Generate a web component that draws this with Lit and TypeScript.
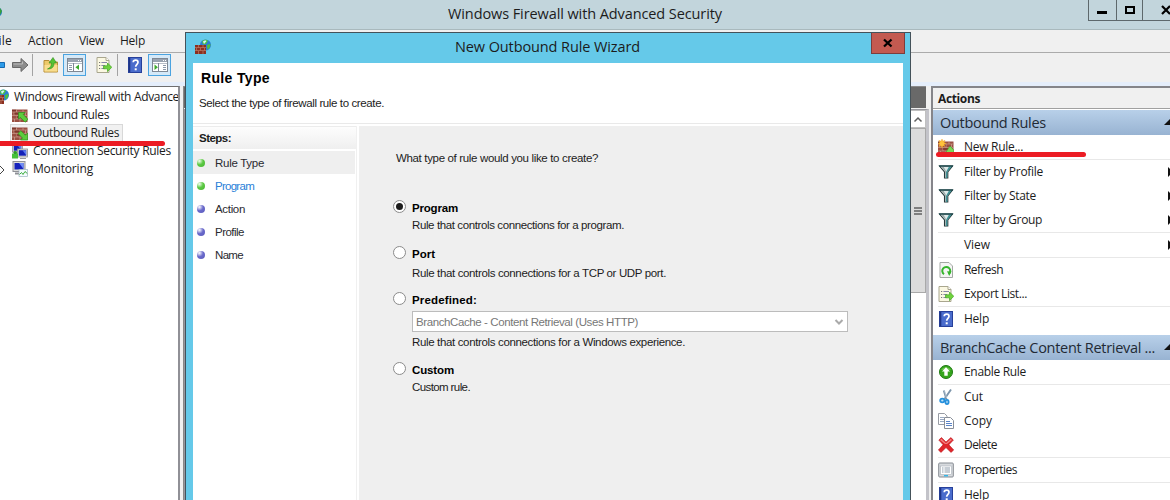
import { LitElement, html, svg, css, nothing, TemplateResult } from "lit";
import { customElement, property } from "lit/decorators.js";

const bricks = svg`
  <rect x="0" y="2.500" width="15.500" height="12.500" fill="#9a4f42"/>
  <path d="M0 5h15.500M0 8.500h15.500M0 12h15.500" stroke="#c99a88" stroke-width=".7"/>
  <path d="M4.500 2.500v2.500M11 2.500v2.500M2 5v3.500M8 5v3.500M13.500 5v3.500M5 8.500v3.500M11 8.500v3.500M2.500 12v3M8 12v3" stroke="#d0a494" stroke-width=".7"/>
  <path d="M0 3.500h4M5 10h5M2.500 6.500h5" stroke="#7c382c" stroke-width="1.400"/>`;

const helpIcon = svg`
  <rect x="1.5" y=".5" width="13" height="15" fill="#4a6ccc" stroke="#27409a"/>
  <path d="M2.5 1v14" stroke="#1d3488" stroke-width="1.6"/>
  <path d="M6.2 5.2C6.4 2.4 11 2.4 11 5.2C11 7.3 8.7 7.4 8.7 9.8" fill="none" stroke="#fff" stroke-width="1.7"/>
  <rect x="7.7" y="11.3" width="2" height="2" fill="#fff"/>`;

const exportIcon = svg`
  <path d="M1 .5h9l3 3v12H1z" fill="#fbf8e2" stroke="#a9a68e"/>
  <path d="M10 .5v3h3" fill="#fff" stroke="#a9a68e"/>
  <path d="M3 5.5h1.2M3 8.5h1.2M3 11.5h1.2" stroke="#777" stroke-width="1.2"/>
  <path d="M5.4 5.5H11M5.4 8.5H9M5.4 11.5H9" stroke="#8a86a8" stroke-width="1.2"/>
  <path d="M7.5 8.8h4V6l4.3 4.3-4.3 4.3v-2.8h-4z" fill="#6fd23c" stroke="#43a522" stroke-width=".7"/>`;

const screen = (x: number, y: number) => svg`
  <rect x="${x}" y="${y}" width="10" height="8" fill="#dcdcd8" stroke="#8f9096" stroke-width=".8"/>
  <rect x="${x + 1.3}" y="${y + 1.2}" width="7.4" height="5.5" fill="#1420b8"/>
  <path d="M${x + 5} ${y + 1.2}h3.7v5z" fill="#5b7bf0"/>`;

const pane = (left: boolean) => svg`
  <rect x=".5" y="1.5" width="15" height="13" fill="#fff" stroke="#7f8894"/>
  <rect x="1" y="2" width="14" height="3" fill="#99a3b0"/>
  <path d="M11 3.5h1M13 3.5h1" stroke="#fff"/>
  <path d="M1 6.5h14" stroke="#b7bec8"/>
  <path d="${left ? "M6.5 6v8" : "M6.5 6v8"}" stroke="#7f8894"/>
  <path d="${left ? "M2 8.5h3M2 10.5h3M2 12.5h3" : "M11 8.5h3M11 10.5h3M11 12.5h3"}" stroke="#8c99aa"/>
  <path d="${left ? "M12 7.5v5.6L8.4 10.3z" : "M2.5 7.5v5.6l3.4-2.8z"}" fill="#3cab2c"/>`;

const ICONS: Record<string, TemplateResult | unknown> = {
  firewall: svg`
    <circle cx="10.5" cy="6" r="5.5" fill="#2c7fd2"/>
    <path d="M7 2.5C9 0 12 .5 13 2L11 5 8 5.500zM12 6l3.500-1c0 3-1.500 5-3 5.500z" fill="#4cc23e"/>
    <path d="M8 2.500C9 1.500 10.500 1.200 11.500 2L9 5z" fill="#d5f5ff"/>
    <rect x="0" y="6" width="11" height="9" fill="#8b2f20"/>
    <path d="M0 8.500h11M0 11.500h11M3.500 6v2.500M8 6v2.500M1.500 9v2.500M5.500 9v2.500M9.500 9v2.500M3.500 12v3M8 12v3" stroke="#c58a74" stroke-width=".6"/>`,
  inbound: svg`${bricks}<path d="M6.500 5.500h6.700l-2 2 4.800 4.800-2.900 2.900-4.800-4.800-1.800 1.800z" fill="#5ccc3c" stroke="#2c8f1c" stroke-width=".7"/>`,
  outbound: svg`${bricks}<path d="M15.700 15H8.500l2-2-4.500-4.500L8.900 5.700l4.500 4.500 2.300-2.300z" fill="#5ccc3c" stroke="#2c8f1c" stroke-width=".7"/>`,
  newrule: svg`${bricks}<path d="M15.800 15h-9l2.200-3.500 3-4.500 3.800 4z" fill="#7cd957" stroke="#3f9a2c" stroke-width=".6"/>
    <path d="M4 0l1 2.300L7 1.300 6 3.500 8.300 4.500 6 5.300l1 2.200L5 6.700 4 9 3 6.700.8 7.500l1-2.200L0 4.500l1.800-1-1-2.200L3 2.300z" fill="#ffc23a" stroke="#ee9a28" stroke-width=".4"/>`,
  security: svg`${screen(0.5, 1)}${screen(5.5, 6)}
    <path d="M0 15.500v-5h2V8.500h3v2h1v5z" fill="#46c03a"/><circle cx="3" cy="9.500" r="1.600" fill="#2f9a2a"/><path d="M8 15.500h6" stroke="#9a9aa0"/>`,
  monitor: svg`<rect x="1" y=".5" width="12" height="10" fill="#dcdcda" stroke="#8f9096"/><rect x="2.500" y="2" width="9" height="6.500" fill="#1622bc"/><path d="M7 2h4.500v6z" fill="#6f8cf5"/>
    <path d="M3 12.500h8" stroke="#8f9096" stroke-width="2"/><rect x="7" y="8.500" width="8.500" height="7" fill="#f4fbff" stroke="#a0b4c0" stroke-width=".7"/>
    <path d="M7.500 13.500l2-2 1.500 2 2-3 2.300 2" fill="none" stroke="#39ad38"/>`,
  back: svg`<path d="M0 8l7-6v3.500h8.500v5H7V14z" fill="#2d9be8" stroke="#1769b0"/>`,
  forward: svg`<path d="M16 8L9 1.500v4H.5v5H9v4z" fill="#8c8c8c" stroke="#686868"/><path d="M1.500 7h9V4.500" fill="none" stroke="#bbb"/>`,
  folder: svg`<path d="M1 3.500h5l1 1.500h7.500v10H1z" fill="#edc96a" stroke="#b68d36"/><path d="M1.500 8h13v6.500h-13z" fill="#f8dd8e"/>
    <path d="M4.500 12c3-1 4-3.500 4-6H6l4-5.500L13.500 6H11c0 4-2 6-6.500 6z" fill="#55c235" stroke="#2e8e1b" stroke-width=".6"/>`,
  paneLeft: pane(true),
  paneRight: pane(false),
  help: helpIcon,
  export: exportIcon,
  filter: svg`<path d="M1.500 2h13L9.800 8v6H6.500V8z" fill="#dfe9e8" stroke="#26383a" stroke-width="1.100"/><path d="M11 2.500h3L9.300 8v6H8V8z" fill="#3e9296"/><path d="M2.500 2.500h3L8 7v6.500h-.8V7.500z" fill="#9aa9a8"/><path d="M1 2h14" stroke="#1d4a4e" stroke-width="1.400"/>`,
  refresh: svg`<path d="M2 .5h9l3.500 3.500v11.500H2z" fill="#f4f5f4" stroke="#a4a8a4"/><path d="M6 12.200A4 4 0 1 1 10.800 12" fill="none" stroke="#35b52c" stroke-width="2"/><path d="M9 9.300l4.500.2-2.300 4.500z" fill="#35b52c"/>`,
  enable: svg`<circle cx="8" cy="8" r="6.500" fill="#35a51c" stroke="#1f7a12"/><path d="M3 6a5.500 4.500 0 0 1 10 0z" fill="#7fd35c" opacity=".7"/><path d="M8 3.200l4 4.300H9.700v4.300H6.300V7.500H4z" fill="#fff"/>`,
  cut: svg`<path d="M5.800 1.500l2.700 9M13 .5L6.500 10" stroke="#7d95ab" stroke-width="1.900"/><path d="M6.600 2l2 7" stroke="#d3dee8" stroke-width=".6"/><ellipse cx="4.300" cy="11.500" rx="2.100" ry="1.800" fill="#bfe2f7" stroke="#2590dc" stroke-width="1.800"/><ellipse cx="9" cy="13" rx="1.600" ry="2.100" fill="#bfe2f7" stroke="#2590dc" stroke-width="1.800"/>`,
  copy: svg`<path d="M.5.500h6l2.500 2.500v8.500H.5z" fill="#fff" stroke="#989ca4"/><path d="M2 4.500h4M2 6.500h4M2 8.500h4" stroke="#9aaac4"/><path d="M6.500 4.500h6l3 3v8h-9z" fill="#fff" stroke="#888e98"/><path d="M8 8.500h4M8 10.500h6M8 12.500h6" stroke="#5b84c8"/>`,
  delete: svg`<path d="M.8 3L3.500.6 8 5 12.800.6 15.400 3 10.900 7.800 15.700 13 13 15.400 8 10.600 3 15.400.4 13 5.100 7.800z" fill="#e0262b" stroke="#b81a20" stroke-width=".6"/><path d="M2 3l1.500-1.300L8 6.200l4.800-4.500L14 3 9 7H7z" fill="#f28080"/>`,
  props: svg`<rect x=".7" y="1" width="14.600" height="14" rx="1" fill="#d7dade" stroke="#868b92"/><rect x="2.500" y="4" width="11" height="8.500" fill="#fff" stroke="#a9b0b8" stroke-width=".6"/><path d="M4 6h1.500M4 8h1.500M4 10h1.500M6.500 6H12M6.500 8H12M6.500 10H12" stroke="#8d9bab"/><path d="M6 13.700h4" stroke="#35b7e8" stroke-width="1.400"/>`,
};

const icon = (name: string) => html`<svg class="ico" viewBox="0 0 16 16" width="16" height="16">${ICONS[name]}</svg>`;

/** A single line of text tracked so that it spans exactly `w` pixels. */
@customElement("fit-text")
class FitText extends LitElement {
  @property({ type: Number }) w = 0;
  @property() text = "";
  static styles = css`
    :host { display: inline-block; white-space: pre; flex: none; }
  `;
  render() {
    return html`<span>${this.text}</span>`;
  }
  updated() {
    const el = this.renderRoot.querySelector("span")!;
    const natural = el.getBoundingClientRect().width;
    if (this.w) el.style.letterSpacing = `${(this.w - natural) / this.text.length}px`;
  }
}

const t = (text: string, w: number, cls = "") => html`<fit-text class=${cls} .text=${text} .w=${w}></fit-text>`;

type Item = { icon?: string; label: string; w: number; sub?: boolean; sep?: boolean };

const RULES: Item[] = [
  { icon: "newrule", label: "New Rule...", w: 59, sep: true },
  { icon: "filter", label: "Filter by Profile", w: 79, sub: true },
  { icon: "filter", label: "Filter by State", w: 72, sub: true },
  { icon: "filter", label: "Filter by Group", w: 78, sub: true, sep: true },
  { label: "View", w: 26, sub: true, sep: true },
  { icon: "refresh", label: "Refresh", w: 39 },
  { icon: "export", label: "Export List...", w: 63, sep: true },
  { icon: "help", label: "Help", w: 25 },
];
const SELECTED: Item[] = [
  { icon: "enable", label: "Enable Rule", w: 62, sep: true },
  { icon: "cut", label: "Cut", w: 19 },
  { icon: "copy", label: "Copy", w: 28 },
  { icon: "delete", label: "Delete", w: 33, sep: true },
  { icon: "props", label: "Properties", w: 53, sep: true },
  { icon: "help", label: "Help", w: 25 },
];

@customElement("app-root")
class AppRoot extends LitElement {
  static styles = css`
    :host { display: block; width: 1170px; height: 500px; overflow: hidden; position: relative;
      font: 12px/18px "Open Sans", "Noto Sans", sans-serif; color: #1c1c1c; background: #f0f0f0; }
    * { box-sizing: border-box; }
    .ico { display: block; flex: none; }
    .frame { display: flex; flex-direction: column; height: 500px; }
    .title { height: 30px; flex: none; background: #c2d5dc; border-bottom: 1px solid #a9b9bd; display: flex; align-items: flex-start; }
    .title .globe { width: 5px; height: 30px; display: block; }
    .title .cap { margin: 4px 0 0 443px; font-size: 14.5px; line-height: 20px; flex: 1; }
    .winbtns { display: flex; border: 1px solid #5e686c; border-top: 0; border-right: 0; height: 21px; width: 82px; flex: none; }
    .winbtns svg { display: block; }
    .menu { height: 23px; flex: none; border-bottom: 1px solid #ababab; display: flex; padding-top: 2px; overflow: hidden; }
    .menu fit-text { margin-right: 16px; }
    .menu .m0 { margin-left: -8px; }
    .tools { height: 29px; flex: none; display: flex; align-items: center; padding-bottom: 5px; }
    .back { margin-left: -11px; }
    .fwd { margin-left: 7px; }
    .tbtn { width: 23px; height: 22px; border: 1px solid #4aa3e0; background: #d5e9f8; display: grid; place-items: center; }
    .body { flex: 1; display: flex; border-top: 4px solid #e5eefb; min-height: 0; background: #f0f0f0; }
    .tree { width: 180px; flex: none; border: 1px solid #6f6f6f; border-left: 0; border-right: 2px solid #909096; border-bottom: 0; background: #fff; overflow: hidden; padding-top: 1px; }
    .row { height: 18px; display: flex; align-items: center; gap: 5px; }
    .root { margin-left: -7px; }
    .node { padding-left: 12px; }
    .sel .hl { margin-left: 10px; width: 113px; height: 18px; padding-left: 1px; display: flex; gap: 5px; align-items: center; background: #f1f1f1; border: 1px solid #d8d8d8; }
    .mid { flex: 1; margin-left: 3px; display: flex; flex-direction: column; border-left: 1px solid #888; }
    .midhead { height: 22px; margin-right: 4px; background: #696969; border-top: 1px solid #8a8a8a; margin-bottom: 1px; }
    .list { flex: 1; display: flex; justify-content: flex-end; border: 1px solid #98989e; border-right: 3px solid #c3c3c9; border-bottom: 0; margin-right: 1px; background: #fff; }
    .scroll { width: 16px; display: flex; flex-direction: column; }
    .up { height: 18px; border: 1px solid #c0c0c0; background: #fff; display: grid; place-items: center; }
    .thumb { height: 165px; background: #dcdcdc; border: 1px solid #a9a9a9; display: grid; place-items: center; }
    .actions { width: 239px; flex: none; border-left: 2px solid #85858a; border-top: 2px solid #85858a; margin-left: 1px; background: #fff; overflow: hidden; }
    .ahead { height: 21px; background: #f0f0f0; border-bottom: 1px solid #a0a0a0; padding-left: 5px; font-weight: 700; line-height: 21px; margin-bottom: 1px; }
    .sect { height: 25px; background: linear-gradient(#b8d0e9, #98b3d2); display: flex; justify-content: space-between; padding: 0 0 0 7px; font-size: 14.5px; line-height: 26px; color: #222a35; }
    .sect svg { margin-top: 9px; }
    .item { height: 24px; display: flex; align-items: center; padding-left: 5px; }
    .item .slot { width: 26px; }
    .item .arrow { margin-left: auto; display: block; }
    .sep { height: 1px; background: #e8e8e8; margin-left: 5px; }
    .gap { height: 4px; }

    .dialog { position: absolute; left: 185px; top: 32px; width: 726px; height: 480px; background: #65c9e9; border: 1px solid #44525a; font-family: "Liberation Sans", Arial, sans-serif; font-size: 11.5px; line-height: 14px; }
    .dbar { height: 30px; display: flex; align-items: flex-start; padding-left: 9px; }
    .dbar .ico { margin-top: 6px; }
    .dbar .cap { margin: 4px 0 0 244px; font: 14.5px/20px "Open Sans", "Noto Sans", sans-serif; flex: 1; }
    .close { width: 34px; height: 21px; background: #c35a50; border: 1px solid #7c3d3c; border-top: 0; display: grid; place-items: center; margin-right: 5px; }
    .client { margin: 0 7px; height: 440px; background: #fff; display: flex; flex-direction: column; }
    .dhead { height: 61px; flex: none; border-bottom: 1px solid #e9e9e9; padding: 7px 0 0 6px; display: flex; flex-direction: column; align-items: flex-start; gap: 10px; }
    .dhead .big { font-size: 14px; line-height: 16px; font-weight: 700; margin-left: 2px; color: #000; }
    .cols { flex: 1; display: flex; padding-top: 2px; }
    .steps { width: 164px; border-right: 1px solid #f0f0f0; }
    .sthead { height: 23px; padding: 4px 0 0 6px; font-weight: 700; background: linear-gradient(#fdfdfd, #efefef); border-top: 1px solid #ececec; margin-bottom: 2px; }
    .step { height: 23px; margin-right: 1px; display: flex; align-items: center; gap: 10px; padding-left: 4px; color: #2a2a30; }
    .step.cur { background: #efefef; }
    .step.link { color: #2a80d8; }
    .dot { width: 8px; height: 8px; border-radius: 50%; background: radial-gradient(circle at 30% 25%, #fff 0, #6a6acb 45%, #5a5abc 100%); }
    .dot.g { background: radial-gradient(circle at 30% 25%, #f4fff0 0, #5cc944 45%, #48b431 100%); }
    .content { flex: 1; margin-left: 2px; background: #efefef; padding: 25px 0 0 34px; display: flex; flex-direction: column; align-items: flex-start; }
    .ask { margin: 0 0 33px 3px; height: 16px; }
    .opt { display: grid; grid-template-columns: 19px auto; height: 48px; align-content: start; }
    .opt.p { height: 46px; }
    .opt.q { height: 46px; }
    .opt.r { height: 70px; }
    .opt .name { font-weight: 700; color: #000; margin-top: 1px; height: 14px; }
    .opt .desc { grid-column: 2; margin-top: 3px; height: 14px; }
    .opt.q .desc { margin-top: 5px; }
    .radio { width: 13px; height: 13px; border-radius: 50%; border: 1px solid #8b8b8b; background: #fff; display: grid; place-items: center; }
    .radio.on::after { content: ""; width: 7px; height: 7px; border-radius: 50%; background: #1c1c1c; }
    .combo { grid-column: 2; width: 436px; height: 21px; background: #fff; border: 1px solid #bcbcbc; margin-top: 4px; padding: 0 3px; display: flex; align-items: center; justify-content: space-between; color: #777; }
    .mark { position: absolute; height: 5px; border-radius: 3px; background: #ec1c24; }
    .mark.a { left: -4px; top: 141px; width: 169px; }
    .mark.b { left: 936px; top: 152px; width: 150px; }
    .expander { position: absolute; left: 0; top: 165px; }
  `;

  private items(list: Item[]) {
    return list.map((i) => html`
      <div class="item">
        <span class="slot">${i.icon ? icon(i.icon) : nothing}</span>${t(i.label, i.w)}
        ${i.sub ? html`<svg class="arrow" width="3" height="10"><path d="M1 0v10l5-5z" fill="#111" /></svg>` : nothing}
      </div>
      ${i.sep ? html`<div class="sep"></div>` : nothing}`);
  }

  private section(label: string, w: number) {
    return html`<div class="sect">${t(label, w)}<svg width="6" height="6"><path d="M0 6L6 0v6z" fill="#111" /></svg></div>`;
  }

  render() {
    return html`
      <div class="frame">
        <div class="title">
          <svg class="globe"><circle cx="-3" cy="12" r="5" fill="#257fc4" /><path d="M0 8l2 3-2 4z" fill="#36a03a" /></svg>
          ${t("Windows Firewall with Advanced Security", 274, "cap")}
          <div class="winbtns">
            <svg width="82" height="20"><path d="M27.500 0v20M53.500 0v20" stroke="#5e686c" /><path d="M8 12.500h10" stroke="#000" stroke-width="3" /><rect x="37" y="7" width="8" height="6" fill="none" stroke="#000" stroke-width="2" /><path d="M73 6l8 8M81 6l-8 8" stroke="#000" stroke-width="2.200" /></svg>
          </div>
        </div>
        <div class="menu">${t("File", 20, "m0")}${t("Action", 35)}${t("View", 25)}${t("Help", 25)}</div>
        <div class="tools">
          <div class="back">${icon("back")}</div>
          <div class="fwd">${icon("forward")}</div>
          <svg width="15" height="22"><path d="M4.500 0v22" stroke="#a3a3a3" /></svg>
          ${icon("folder")}
          <svg width="4" height="2"></svg>
          <div class="tbtn">${icon("paneLeft")}</div>
          <svg width="10" height="2"></svg>
          ${icon("export")}
          <svg width="15" height="22"><path d="M5.500 0v22" stroke="#a3a3a3" /></svg>
          ${icon("help")}
          <svg width="5" height="2"></svg>
          <div class="tbtn">${icon("paneRight")}</div>
        </div>
        <div class="body">
          <div class="tree">
            <div class="row root">${icon("firewall")}${t("Windows Firewall with Advanced", 172)}</div>
            <div class="row node">${icon("inbound")}${t("Inbound Rules", 76)}</div>
            <div class="row sel"><div class="hl">${icon("outbound")}${t("Outbound Rules", 86)}</div></div>
            <div class="row node">${icon("security")}${t("Connection Security Rules", 138)}</div>
            <div class="row node">${icon("monitor")}${t("Monitoring", 60)}</div>
          </div>
          <div class="mid">
            <div class="midhead"></div>
            <div class="list">
              <div class="scroll">
                <div class="up"><svg width="10" height="7"><path d="M1.500 5.500L5 2l3.500 3.500" fill="none" stroke="#606060" stroke-width="1.500" /></svg></div>
                <div class="thumb"><svg width="8" height="8"><path d="M0 1h8M0 4h8M0 7h8" stroke="#606060" stroke-width="1.300" /></svg></div>
              </div>
            </div>
          </div>
          <div class="actions">
            <div class="ahead">${t("Actions", 42)}</div>
            ${this.section("Outbound Rules", 106)}
            ${this.items(RULES)}
            <div class="gap"></div>
            ${this.section("BranchCache Content Retrieval ...", 215)}
            ${this.items(SELECTED)}
          </div>
        </div>
      </div>
      <svg class="expander" width="6" height="10"><path d="M0 1l4 4-4 4" fill="#fff" stroke="#444" /></svg>
      <div class="dialog">
        <div class="dbar">
          ${icon("firewall")}
          ${t("New Outbound Rule Wizard", 185, "cap")}
          <div class="close"><svg width="10" height="10"><path d="M1 1.500l7.500 7M8.500 1.500l-7.500 7" stroke="#000" stroke-width="2.300" /></svg></div>
        </div>
        <div class="client">
          <div class="dhead">${t("Rule Type", 69, "big")}${t("Select the type of firewall rule to create.", 185)}</div>
          <div class="cols">
            <div class="steps">
              <div class="sthead">${t("Steps:", 32)}</div>
              <div class="step cur"><i class="dot g"></i>${t("Rule Type", 49)}</div>
              <div class="step link"><i class="dot g"></i>${t("Program", 39)}</div>
              <div class="step"><i class="dot"></i>${t("Action", 30)}</div>
              <div class="step"><i class="dot"></i>${t("Profile", 29)}</div>
              <div class="step"><i class="dot"></i>${t("Name", 28)}</div>
            </div>
            <div class="content">
              <div class="ask">${t("What type of rule would you like to create?", 202)}</div>
              <div class="opt p"><i class="radio on"></i>${t("Program", 46, "name")}${t("Rule that controls connections for a program.", 212, "desc")}</div>
              <div class="opt q"><i class="radio"></i>${t("Port", 23, "name")}${t("Rule that controls connections for a TCP or UDP port.", 254, "desc")}</div>
              <div class="opt r"><i class="radio"></i>${t("Predefined:", 65, "name")}
                <div class="combo">${t("BranchCache - Content Retrieval (Uses HTTP)", 222)}<svg width="10" height="8"><path d="M1.500 2L5 5.500 8.500 2" fill="none" stroke="#aaa" stroke-width="2" /></svg></div>
                ${t("Rule that controls connections for a Windows experience.", 273, "desc")}</div>
              <div class="opt c"><i class="radio"></i>${t("Custom", 42, "name")}${t("Custom rule.", 58, "desc")}</div>
            </div>
          </div>
        </div>
      </div>
      <div class="mark a"></div>
      <div class="mark b"></div>
    `;
  }
}
